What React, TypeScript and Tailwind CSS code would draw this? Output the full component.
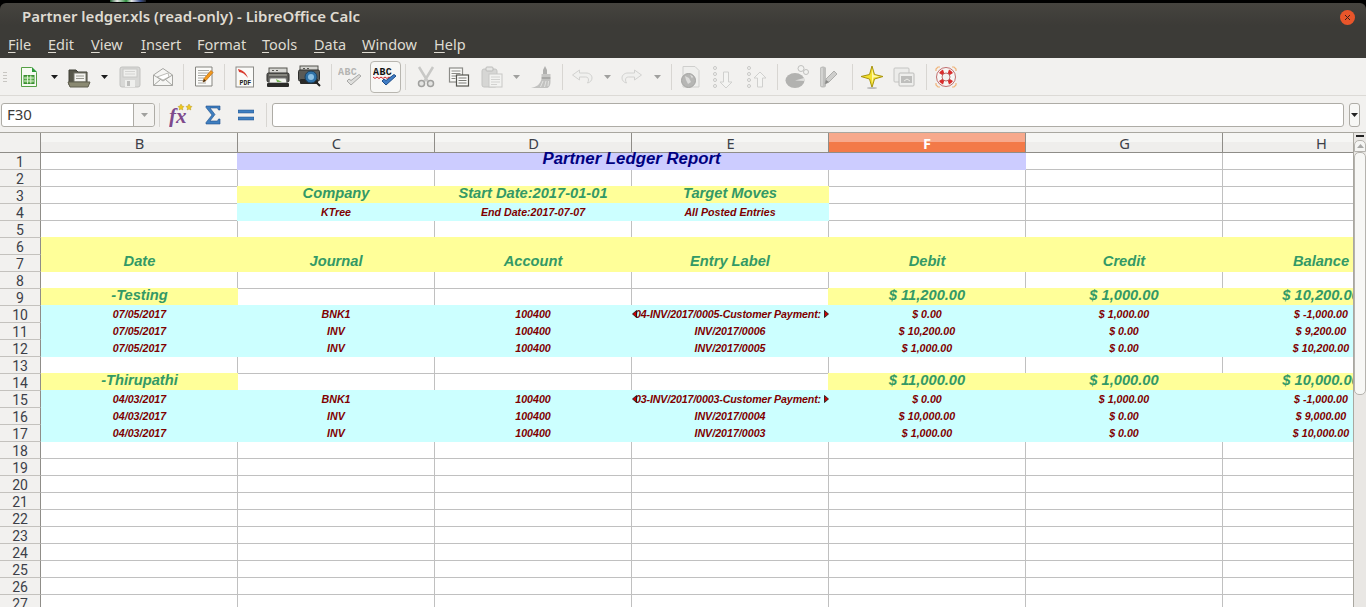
import type { ReactNode } from 'react'

const uiFont = "font-['Noto_Sans',sans-serif]"
const lineCell = 'border-r border-b border-[#c0c0c0] bg-white'

function Svg({ w = 24, h = 24, children }: { w?: number; h?: number; children: ReactNode }) {
  return (
    <svg width={w} height={h} viewBox={`0 0 ${w} ${h}`} fill="none">
      {children}
    </svg>
  )
}

function Slot({ w, children }: { w: string; children?: ReactNode }) {
  return <div className={`${w} h-[30px] flex items-center justify-center shrink-0`}>{children}</div>
}

function Sep() {
  return <div className="w-px h-[26px] bg-[#d8d6d2]" />
}

function Drop({ dim }: { dim?: boolean }) {
  return (
    <svg width="7" height="4" viewBox="0 0 7 4">
      <path d="M0 0h7L3.500 4z" fill={dim ? '#a0a09e' : '#1c1c1c'} />
    </svg>
  )
}

function NewIcon() {
  return (
    <Svg w={18} h={22}>
      <path d="M1.500 1.500h10l5 5v14h-15z" fill="#f6faf2" stroke="#55a044" />
      <path d="M12 1l5 5h-5z" fill="#2f9a3a" />
      <rect x="4" y="9.500" width="10" height="8" fill="#5ab04a" stroke="#3b8a33" />
      <path d="M4 12h10M4 15h10M7.500 9.500v8M10.800 9.500v8" stroke="#dff0d4" />
    </Svg>
  )
}

function OpenIcon() {
  return (
    <Svg w={24} h={22}>
      <path d="M2 4h7l2 2h9v13H2z" fill="#57574a" stroke="#3e3e34" />
      <rect x="7" y="7" width="12" height="9" fill="#f4f4f0" stroke="#77776a" />
      <path d="M9 10h8M9 12.500h8" stroke="#9a9a90" />
      <path d="M1 16h22l-2 5H3z" fill="#8b8a72" stroke="#5f5e4e" />
    </Svg>
  )
}

function SaveIcon() {
  return (
    <Svg w={22} h={22}>
      <rect x="1" y="1" width="20" height="20" rx="2" fill="#d8d8d6" stroke="#c2c2c0" />
      <rect x="4" y="3" width="14" height="8" fill="#efefed" stroke="#c8c8c6" />
      <path d="M6 5.500h10M6 8h10" stroke="#d4d4d2" />
      <rect x="6" y="14" width="10" height="7" fill="#efefed" />
      <rect x="8" y="15" width="3" height="5" fill="#bdbdbb" />
    </Svg>
  )
}

function MailIcon() {
  return (
    <Svg w={22} h={20}>
      <path d="M1.500 8L11 1.500 20.500 8v10.500h-19z" fill="#f6f6f4" stroke="#a6a6a2" />
      <path d="M5 10l11-4 1 4-6 3z" fill="#fff" stroke="#bcbcb8" />
      <path d="M1.500 8l9.500 6 9.500-6M1.500 18.500l7-6M20.500 18.500l-7-6" stroke="#a6a6a2" />
    </Svg>
  )
}

function EditIcon() {
  return (
    <Svg w={20} h={21}>
      <path d="M1.500 1h16.500v19h-16.500z" fill="#fbfbf9" stroke="#858580" />
      <path d="M4 4.500h11M4 7h11M4 9.500h8M4 12h6M4 14.500h5M4 17h8" stroke="#a8a8a4" />
      <path d="M9 16l1-3.500 7-8 2 2-7 8z" fill="#f39a1c" stroke="#b8660c" strokeWidth=".7" />
      <path d="M9 16l1-3 2 2z" fill="#3a2a1a" />
    </Svg>
  )
}

function PdfIcon() {
  return (
    <Svg w={20} h={22}>
      <rect x="1" y="1" width="17.500" height="20" fill="#fafaf8" stroke="#8a8a86" />
      <path d="M3 3c4 1 8 3 10 9-3-4-6-6-9-6 0-1-1-2-1-3z" fill="#d93a2e" />
      <text x="4.500" y="18.500" fontSize="6.500" fontWeight="700" fill="#222" fontFamily="Liberation Mono, monospace">
        PDF
      </text>
    </Svg>
  )
}

function PrintIcon() {
  return (
    <Svg w={24} h={22}>
      <rect x="3" y="2" width="18" height="6" fill="#d6d6d2" stroke="#55554f" />
      <path d="M6 4.500h2M10 4.500h2" stroke="#55554f" />
      <rect x="1" y="7" width="22" height="9" rx="1.500" fill="#5c5c58" stroke="#2e2e2c" />
      <rect x="3" y="8" width="18" height="2" fill="#86867f" />
      <path d="M4 12h16l1 5H3z" fill="#f2f4ee" stroke="#777" />
      <path d="M10 13l6 3h-5z" fill="#7cb85a" />
      <rect x="1" y="17" width="22" height="4" rx="1" fill="#2a2a28" />
    </Svg>
  )
}

function PreviewIcon() {
  return (
    <Svg w={24} h={23}>
      <rect x="2" y="1" width="18" height="5" fill="#d4d4d0" stroke="#55554f" />
      <path d="M5 3.500h2M9 3.500h2" stroke="#55554f" />
      <rect x="0.500" y="5" width="21" height="11" rx="1.500" fill="#5a5a56" stroke="#2e2e2c" />
      <rect x="2" y="14" width="18" height="5" rx="1" fill="#2a2a28" />
      <circle cx="13" cy="12" r="6" fill="#2f72a8" stroke="#1d3f5c" />
      <circle cx="13" cy="12" r="3" fill="#8cc0e4" />
      <path d="M17.500 16.500l4.500 4.500" stroke="#222" strokeWidth="2" />
    </Svg>
  )
}

function SpellIcon({ active }: { active?: boolean }) {
  return (
    <Svg w={26} h={22}>
      <text
        x="0"
        y="8.500"
        fontSize="10"
        fontWeight="700"
        letterSpacing=".4"
        fill={active ? '#111' : '#b4b4b2'}
        fontFamily="Liberation Mono, monospace"
      >
        ABC
      </text>
      {active && <path d="M0 11l2 1.500 2-1.500 2 1.500 2-1.500 2 1.500 2-1.500 2 1.500 2-1.500 2 1.500 2-1.500" stroke="#d8232a" />}
      <path
        d="M9 15l4 4 10-9-2-1.500-8 6-2-1.500z"
        fill={active ? '#3f7cc4' : '#dededc'}
        stroke={active ? '#1f4f8a' : '#a8a8a6'}
      />
    </Svg>
  )
}

function CutIcon() {
  return (
    <Svg w={18} h={22}>
      <path d="M2 1l8.500 14M16 1L7.500 15" stroke="#c8c8c6" strokeWidth="2.500" />
      <circle cx="4.500" cy="17.500" r="3" fill="#e4e4e2" stroke="#a0a09e" strokeWidth="1.500" />
      <circle cx="13.500" cy="17.500" r="3" fill="#e4e4e2" stroke="#a0a09e" strokeWidth="1.500" />
    </Svg>
  )
}

function CopyIcon() {
  return (
    <Svg w={22} h={20}>
      <rect x="1.500" y="1" width="13" height="14" fill="#fafaf8" stroke="#8c8c88" strokeWidth="1.200" />
      <path d="M3.500 4h9M3.500 6.500h9M3.500 9h9M3.500 11.500h4" stroke="#8a8a86" />
      <rect x="8.500" y="8" width="12" height="11" fill="#fafaf8" stroke="#55554f" strokeWidth="1.200" />
      <path d="M10.500 11h8M10.500 13.500h8M10.500 16h8" stroke="#7a7a76" />
    </Svg>
  )
}

function PasteIcon() {
  return (
    <Svg w={22} h={22}>
      <rect x="1" y="3" width="15" height="18" rx="2" fill="#d6d6d4" stroke="#c4c4c2" />
      <rect x="5" y="1" width="7" height="4" rx="1" fill="#e6e6e4" stroke="#bcbcba" />
      <rect x="8" y="8" width="13" height="13" fill="#f2f2f0" stroke="#c8c8c6" />
      <path d="M10 11h9M10 13.500h9M10 16h9M10 18.500h6" stroke="#d2d2d0" />
    </Svg>
  )
}

function BrushIcon() {
  return (
    <Svg w={24} h={24}>
      <path d="M15 1l2 4v5h-4V5z" fill="#b0b0ae" />
      <rect x="11.500" y="9" width="9" height="3" fill="#c6c6c4" />
      <rect x="11.500" y="12" width="9" height="2" fill="#a8a8a6" />
      <path d="M11.500 14h9v3c0 3-1 5-3 6H1c5-1 9-3 10.500-9z" fill="#c2c2c0" />
      <path d="M13 16l-2.500 6M16 16l-1.500 6M18.500 16l-.5 5" stroke="#e2e2e0" />
    </Svg>
  )
}

function ArrowIcon({ flip }: { flip?: boolean }) {
  return (
    <Svg w={22} h={18}>
      <g transform={flip ? 'matrix(-1 0 0 1 22 0)' : undefined}>
        <path
          d="M8.500 2L1.500 7l7 5V9h6c2 0 3 1 3 3 0 1-.5 2-1 3 2.500-.5 4.500-2.500 4.500-5 0-3-2.500-5-6-5h-6.500z"
          fill="#f0f0ee"
          stroke="#d2d2d0"
        />
      </g>
    </Svg>
  )
}

function LinkIcon() {
  return (
    <Svg w={20} h={24}>
      <path d="M3 1.500h12l4 4V22H3z" fill="#efefed" stroke="#cfcfcd" />
      <circle cx="8.500" cy="15.500" r="7" fill="#b6b6b4" stroke="#a4a4a2" />
      <path d="M5 11l4 2 2 4-3 2-2-4zM10 9.500l3 2-1 2z" fill="#dcdcda" />
    </Svg>
  )
}

function SortIcon({ up }: { up?: boolean }) {
  return (
    <Svg w={22} h={24}>
      <circle cx="3" cy="3" r="1.500" fill="#f4f4f2" stroke="#c8c8c6" />
      <circle cx="3" cy="9" r="1.500" fill="#f4f4f2" stroke="#c8c8c6" />
      <circle cx="3" cy="15" r="1.500" fill="#f4f4f2" stroke="#c8c8c6" />
      <circle cx="3" cy="21" r="1.500" fill="#f4f4f2" stroke="#c8c8c6" />
      <path
        d={up ? 'M14 7l6 6h-3.500v9h-5v-9H8z' : 'M11.500 7h5v10H20l-6 6-6-6h3.500z'}
        fill="#f4f4f2"
        stroke="#d0d0ce"
      />
    </Svg>
  )
}

function ChartIcon() {
  return (
    <Svg w={24} h={24}>
      <circle cx="16" cy="3.500" r="3" fill="#f2f2f0" stroke="#c0c0be" />
      <circle cx="21" cy="7" r="2.500" fill="#f2f2f0" stroke="#c0c0be" />
      <ellipse cx="10" cy="15.500" rx="9.500" ry="7.500" fill="#b2b2b0" />
      <path d="M10 15.500l9 -2.500 .5 3z" fill="#e0e0de" />
    </Svg>
  )
}

function DrawIcon() {
  return (
    <Svg w={20} h={24}>
      <path d="M2 3c1-2 5-2 6 0v18c-1 2-5 2-6 0z" fill="#c0c0be" />
      <path d="M4 3v18" stroke="#e6e6e4" />
      <path d="M7 19l1-5 8-8 3 3-8 8z" fill="#cececc" stroke="#aeaeac" />
      <path d="M7 19l1-4 3 2z" fill="#888886" />
    </Svg>
  )
}

function StarIcon() {
  return (
    <Svg w={24} h={24}>
      <path d="M12 1l2.500 8.500L23 11.500l-8.500 2.500L12 22.500 9.500 14 1 11.500l8.500-2z" fill="#f4e12e" stroke="#a89410" />
      <path d="M12 4l1.500 6 6 1.500-6 1-1.500 6z" fill="#fff8a8" />
      <ellipse cx="12" cy="23" rx="5" ry="1" fill="#bbb" />
    </Svg>
  )
}

function GalleryIcon() {
  return (
    <Svg w={22} h={20}>
      <rect x="1" y="1" width="15" height="14" rx="1" fill="#ececea" stroke="#c4c4c2" />
      <rect x="6" y="6" width="15" height="13" rx="1" fill="#eeeeec" stroke="#bcbcba" />
      <rect x="8" y="9" width="11" height="7" fill="#bebebc" />
      <path d="M11 14l3-2 3 2" stroke="#ecece8" />
    </Svg>
  )
}

function HelpIcon() {
  return (
    <Svg w={22} h={22}>
      <path d="M1 5V3l2-2h2M17 1h2l2 2v2M21 17v2l-2 2h-2M5 21H3l-2-2v-2" stroke="#f0b478" strokeWidth="1.200" />
      <circle cx="11" cy="11" r="7.500" fill="none" stroke="#f6f6f4" strokeWidth="5" />
      <path d="M4 7a9 9 0 0 1 4-3.500l1.500 4.500-1.500 1.500zM18 7a9 9 0 0 0-4-3.500l-1.500 4.500 1.500 1.500zM4 15a9 9 0 0 0 4 3.500l1.500-4.500-1.500-1.500zM18 15a9 9 0 0 1-4 3.500l-1.500-4.500 1.500-1.500z" fill="#d92c2c" />
      <circle cx="11" cy="11" r="9.500" fill="none" stroke="#a83030" strokeWidth=".7" />
      <circle cx="11" cy="11" r="4" fill="#f2f1ef" stroke="#a83030" strokeWidth=".7" />
    </Svg>
  )
}

function FxIcon() {
  return (
    <svg width="24" height="24" viewBox="0 0 24 24">
      <text x="0" y="20" fontSize="21" fontWeight="700" fontStyle="italic" fill="#7d4a8c" fontFamily="Liberation Serif, serif">
        fx
      </text>
      <path d="M12 1l1 2 2 .5-1.500 1.500.3 2-1.800-1-1.800 1 .3-2L9 3.500l2-.5zM20 1l1 2 2 .5-1.500 1.500.3 2-1.800-1-1.800 1 .3-2L17 3.500l2-.5z" fill="#f0c81e" stroke="#a88a10" strokeWidth=".4" />
    </svg>
  )
}

function Toolbar() {
  return (
    <div className="h-[38px] flex items-center bg-[#f2f1ef] border-b border-[#dcdad6]">
      <Slot w="w-[10px]">
        <div className="flex flex-col gap-[2px] w-[4px]">
          <div className="h-px bg-[#c8c6c2]" />
          <div className="h-px bg-[#c8c6c2]" />
          <div className="h-px bg-[#c8c6c2]" />
          <div className="h-px bg-[#c8c6c2]" />
        </div>
      </Slot>
      <Slot w="w-[38px]"><NewIcon /></Slot>
      <Slot w="w-[12px]"><Drop /></Slot>
      <Slot w="w-[38px]"><OpenIcon /></Slot>
      <Slot w="w-[12px]"><Drop /></Slot>
      <Slot w="w-[40px]"><SaveIcon /></Slot>
      <Slot w="w-[26px]"><MailIcon /></Slot>
      <Slot w="w-[14px]"><Sep /></Slot>
      <Slot w="w-[28px]"><EditIcon /></Slot>
      <Slot w="w-[12px]"><Sep /></Slot>
      <Slot w="w-[30px]"><PdfIcon /></Slot>
      <Slot w="w-[36px]"><PrintIcon /></Slot>
      <Slot w="w-[28px]"><PreviewIcon /></Slot>
      <Slot w="w-[14px]"><Sep /></Slot>
      <Slot w="w-[26px]"><SpellIcon /></Slot>
      <div className="ml-[6px] w-[31px] h-[32px] shrink-0 flex items-center justify-center rounded-[4px] border border-[#b8b6b0] bg-[#f7f7f5]">
        <SpellIcon active />
      </div>
      <Slot w="w-[8px]"><Sep /></Slot>
      <Slot w="w-[34px]"><CutIcon /></Slot>
      <Slot w="w-[32px]"><CopyIcon /></Slot>
      <Slot w="w-[34px]"><PasteIcon /></Slot>
      <Slot w="w-[14px]"><Drop dim /></Slot>
      <Slot w="w-[38px]"><BrushIcon /></Slot>
      <Slot w="w-[2px]"><Sep /></Slot>
      <Slot w="w-[38px]"><ArrowIcon /></Slot>
      <Slot w="w-[12px]"><Drop dim /></Slot>
      <Slot w="w-[38px]"><ArrowIcon flip /></Slot>
      <Slot w="w-[12px]"><Drop dim /></Slot>
      <Slot w="w-[16px]"><Sep /></Slot>
      <Slot w="w-[22px]"><LinkIcon /></Slot>
      <Slot w="w-[44px]"><SortIcon /></Slot>
      <Slot w="w-[24px]"><SortIcon up /></Slot>
      <Slot w="w-[16px]"><Sep /></Slot>
      <Slot w="w-[24px]"><ChartIcon /></Slot>
      <Slot w="w-[38px]"><DrawIcon /></Slot>
      <Slot w="w-[10px]"><Sep /></Slot>
      <Slot w="w-[30px]"><StarIcon /></Slot>
      <Slot w="w-[34px]"><GalleryIcon /></Slot>
      <Slot w="w-[10px]"><Sep /></Slot>
      <Slot w="w-[30px]"><HelpIcon /></Slot>
    </div>
  )
}

function FormulaBar() {
  return (
    <div className="h-[37px] flex items-start pt-[7px] bg-[#f2f1ef] border-b border-[#a9a7a0]">
      <div className={`ml-[1px] w-[154px] h-[24px] flex rounded-[3px] border border-[#aeaca6] bg-white text-[15px] text-[#3c3b37] ${uiFont}`}>
        <div className="flex-1 flex items-center pl-[5px] pb-[2px]">F30</div>
        <div className="w-[21px] flex items-center justify-center border-l border-[#aeaca6] bg-[#f4f3f1] rounded-r-[3px]">
          <Drop dim />
        </div>
      </div>
      <div className="ml-[4px] w-px h-[24px] bg-[#d8d6d2]" />
      <div className="ml-[9px] w-[24px] h-[24px] flex items-center justify-center"><FxIcon /></div>
      <div className="ml-[8px] w-[24px] h-[24px] flex items-center justify-center">
        <svg width="16" height="20" viewBox="0 0 16 20">
          <path d="M1 1h14v4h-1.500l-1-2H5l5 6.500L5 16h7.500l1-2H15v5H1v-1.500L7 10 1 2.500z" fill="#3f7fc0" stroke="#1f4f8a" strokeWidth=".6" />
        </svg>
      </div>
      <div className="ml-[9px] w-[24px] h-[24px] flex items-center justify-center">
        <svg width="16" height="12" viewBox="0 0 16 12">
          <rect y="1" width="16" height="3" fill="#3f7fc0" stroke="#1f4f8a" strokeWidth=".5" />
          <rect y="8" width="16" height="3" fill="#3f7fc0" stroke="#1f4f8a" strokeWidth=".5" />
        </svg>
      </div>
      <div className="ml-[8px] w-px h-[24px] bg-[#d8d6d2]" />
      <div className="ml-[5px] w-[1072px] h-[24px] rounded-[3px] border border-[#aeaca6] bg-white" />
      <div className="ml-[5px] w-[11px] h-[24px] flex items-center justify-center rounded-[3px] border border-[#aeaca6] bg-[#f7f7f5]">
        <svg width="7" height="4" viewBox="0 0 7 4"><path d="M0 0h7L3.500 4z" fill="#222" /></svg>
      </div>
    </div>
  )
}

function ColHead({ label, active }: { label: string; active?: boolean }) {
  if (active) {
    return (
      <div className={`flex items-center justify-center border-r border-b border-[#8f8d88] bg-[linear-gradient(#f7a98c_0_50%,#f37a48_50%_100%)] text-[14.670px] font-bold text-white ${uiFont}`}>
        {label}
      </div>
    )
  }
  return (
    <div className={`flex items-center justify-center pl-px border-r border-b border-[#8f8d88] bg-[linear-gradient(#f6f6f4_0_50%,#efeeec_50%_100%)] text-[14.670px] text-[#3c4048] ${uiFont}`}>
      {label}
    </div>
  )
}

function RowHead({ n }: { n: number }) {
  return (
    <div className="flex items-center justify-center pt-px border-r border-b border-r-[#8f8d88] border-b-[#c4c2be] bg-[#f2f1ef] font-['Roboto',sans-serif] text-[14px] leading-none text-[#3c4048]">
      {n}
    </div>
  )
}

type Tone = 'label' | 'small'

const toneClass: Record<Tone, string> = {
  label: 'text-[14.670px] leading-[16px] text-[#339966] pb-[5px]',
  small: 'text-[10.670px] leading-[12px] text-[#800000]',
}

function Fill({ color, tone, first, children }: { color: string; tone: Tone; first?: boolean; children?: ReactNode }) {
  return (
    <div
      className={`flex justify-center items-center overflow-hidden whitespace-nowrap mt-[-1px] font-['Liberation_Sans',sans-serif] font-bold italic ${first ? '' : 'ml-[-1px]'} ${color} ${toneClass[tone]}`}
    >
      {children}
    </div>
  )
}

function Blank({ count = 1 }: { count?: number }) {
  return (
    <>
      {Array.from({ length: count }, (_, i) => (
        <div key={i} className={lineCell} />
      ))}
    </>
  )
}

const yellow = 'bg-[#ffff99]'
const cyan = 'bg-[#ccffff]'

function ClipMark({ right }: { right?: boolean }) {
  return (
    <svg
      width="5"
      height="8"
      viewBox="0 0 5 8"
      className={`absolute top-[5px] ${right ? 'right-0' : 'left-px rotate-180'}`}
    >
      <path d="M0.500 0.500L4.500 4 .500 7.500z" fill="#cc0000" stroke="#111" strokeWidth=".8" />
    </svg>
  )
}

function ClippedEntry({ text }: { text: string }) {
  return (
    <div className="relative flex items-center mt-[-1px] ml-[-1px] pl-[4px] overflow-hidden whitespace-nowrap font-['Liberation_Sans',sans-serif] font-bold italic text-[10.670px] leading-[12px] tracking-[-0.14px] text-[#800000] bg-[#ccffff]">
      {text}
      <ClipMark />
      <ClipMark right />
    </div>
  )
}

function Entry({ cols, clipped }: { cols: string[]; clipped?: boolean }) {
  return (
    <>
      {cols.map((c, i) =>
        i === 3 && clipped ? (
          <ClippedEntry key={i} text={c} />
        ) : (
          <Fill key={i} color={cyan} tone="small" first={i === 0}>
            {c}
          </Fill>
        ),
      )}
    </>
  )
}

function Group({ name, debit, credit, balance }: { name: string; debit: string; credit: string; balance: string }) {
  return (
    <>
      <Fill color={yellow} tone="label" first>{name}</Fill>
      <Blank count={3} />
      <Fill color={yellow} tone="label">{debit}</Fill>
      <Fill color={yellow} tone="label">{credit}</Fill>
      <Fill color={yellow} tone="label">{balance}</Fill>
    </>
  )
}

function Sheet() {
  const rows = Array.from({ length: 27 }, (_, i) => i + 1)
  const heads = ['Date', 'Journal', 'Account', 'Entry Label', 'Debit', 'Credit', 'Balance']

  const body: Record<number, ReactNode> = {
    1: (
      <>
        <Blank />
        <div className="col-span-4 ml-[-1px] flex justify-center items-start bg-[#ccccff] font-['Liberation_Sans',sans-serif] font-bold italic text-[16.800px] leading-[11px] text-[#000080]">
          Partner Ledger Report
        </div>
        <Blank count={2} />
      </>
    ),
    3: (
      <>
        <Blank />
        <Fill color={yellow} tone="label">Company</Fill>
        <Fill color={yellow} tone="label">Start Date:2017-01-01</Fill>
        <Fill color={yellow} tone="label">Target Moves</Fill>
        <Blank count={3} />
      </>
    ),
    4: (
      <>
        <Blank />
        <Fill color={cyan} tone="small">KTree</Fill>
        <Fill color={cyan} tone="small">End Date:2017-07-07</Fill>
        <Fill color={cyan} tone="small">All Posted Entries</Fill>
        <Blank count={3} />
      </>
    ),
    9: <Group name="-Testing" debit="$ 11,200.00" credit="$ 1,000.00" balance="$ 10,200.00" />,
    10: <Entry clipped cols={['07/05/2017', 'BNK1', '100400', '04-INV/2017/0005-Customer Payment:', '$ 0.00', '$ 1,000.00', '$ -1,000.00']} />,
    11: <Entry cols={['07/05/2017', 'INV', '100400', 'INV/2017/0006', '$ 10,200.00', '$ 0.00', '$ 9,200.00']} />,
    12: <Entry cols={['07/05/2017', 'INV', '100400', 'INV/2017/0005', '$ 1,000.00', '$ 0.00', '$ 10,200.00']} />,
    14: <Group name="-Thirupathi" debit="$ 11,000.00" credit="$ 1,000.00" balance="$ 10,000.00" />,
    15: <Entry clipped cols={['04/03/2017', 'BNK1', '100400', '03-INV/2017/0003-Customer Payment:', '$ 0.00', '$ 1,000.00', '$ -1,000.00']} />,
    16: <Entry cols={['04/03/2017', 'INV', '100400', 'INV/2017/0004', '$ 10,000.00', '$ 0.00', '$ 9,000.00']} />,
    17: <Entry cols={['04/03/2017', 'INV', '100400', 'INV/2017/0003', '$ 1,000.00', '$ 0.00', '$ 10,000.00']} />,
  }

  return (
    <div className="flex-1 min-w-0 overflow-hidden">
      <div className="grid grid-cols-[41px_repeat(7,197px)] grid-rows-[20px] auto-rows-[17px] w-[1420px]">
        <div className="border-r border-b border-[#8f8d88] bg-[#f2f1ef]" />
        {['B', 'C', 'D', 'E', 'F', 'G', 'H'].map((c) => (
          <ColHead key={c} label={c} active={c === 'F'} />
        ))}
        {rows.map((n) => {
          if (n === 6) {
            return (
              <div key={n} className="contents">
                <RowHead n={6} />
                {heads.map((h, i) => (
                  <div
                    key={h}
                    className={`row-span-2 flex justify-center items-end mt-[-1px] bg-[#ffff99] font-['Liberation_Sans',sans-serif] font-bold italic text-[14.670px] leading-[17px] pb-[2px] text-[#339966] ${i === 0 ? '' : 'ml-[-1px]'}`}
                  >
                    {h}
                  </div>
                ))}
              </div>
            )
          }
          if (n === 7) {
            return <RowHead key={n} n={7} />
          }
          return (
            <div key={n} className="contents">
              <RowHead n={n} />
              {body[n] ?? <Blank count={7} />}
            </div>
          )
        })}
      </div>
    </div>
  )
}

function ScrollBar() {
  return (
    <div className="w-[13px] shrink-0 flex flex-col items-center bg-[#e9e7e4] border-l border-[#a9a7a0]">
      <div className="mt-[2px] w-[8px] h-[2px] bg-[#222]" />
      <div className="mt-[3px] w-[12px] h-[12px] flex items-center justify-center rounded-t-[5px] border border-[#b5b3ae] bg-[#f5f5f3]">
        <svg width="7" height="4" viewBox="0 0 7 4"><path d="M3.500 0L7 4H0z" fill="#a8a8a6" /></svg>
      </div>
      <div className="w-[12px] h-[243px] rounded-[5px] border border-[#b5b3ae] bg-[#f7f7f5]" />
    </div>
  )
}

export default function App() {
  const menus = [
    ['F', 'ile', 'w-[40px]'],
    ['E', 'dit', 'w-[43px]'],
    ['V', 'iew', 'w-[50px]'],
    ['I', 'nsert', 'w-[56px]'],
    ['', 'Format', 'w-[65px]'],
    ['T', 'ools', 'w-[52px]'],
    ['D', 'ata', 'w-[48px]'],
    ['W', 'indow', 'w-[72px]'],
    ['H', 'elp', 'w-[50px]'],
  ]

  return (
    <div className="w-[1366px] h-[607px] overflow-hidden flex flex-col bg-black">
      <div className="h-[3px] shrink-0 bg-black">
        <div className="ml-[110px] w-[36px] h-[2px] bg-[linear-gradient(90deg,#1c5a2c,#e8e8e8_20%,#2f8f3f_45%,#e8e8e8_60%,#3a4f8a_85%,#222)]" />
      </div>
      <div className={`h-[55px] shrink-0 rounded-t-[6px] bg-[linear-gradient(#46443f,#3c3b37_40%)] text-[#dfdbd2] ${uiFont}`}>
        <div className="h-[28px] flex items-center justify-between pl-[22px] pr-[11px]">
          <span className="text-[15px] font-semibold pb-[2px]">Partner ledger.xls (read-only) - LibreOffice Calc</span>
          <div className="w-[15px] h-[15px] flex items-center justify-center rounded-full bg-[#e8552a] text-[#3c2018]">
            <svg width="7" height="7" viewBox="0 0 7 7"><path d="M1 1l5 5M6 1L1 6" stroke="currentColor" /></svg>
          </div>
        </div>
        <div className="flex pl-[8px] pt-px text-[14.500px] leading-[24px]">
          {menus.map(([key, rest, w]) => (
            <div key={rest} className={`${w} shrink-0`}>
              {key ? (
                <>
                  <span className="underline underline-offset-2">{key}</span>
                  {rest}
                </>
              ) : (
                <>
                  F<span className="underline underline-offset-2">o</span>rmat
                </>
              )}
            </div>
          ))}
        </div>
      </div>
      <Toolbar />
      <FormulaBar />
      <div className="flex-1 min-h-0 flex overflow-hidden bg-white">
        <Sheet />
        <ScrollBar />
      </div>
    </div>
  )
}
